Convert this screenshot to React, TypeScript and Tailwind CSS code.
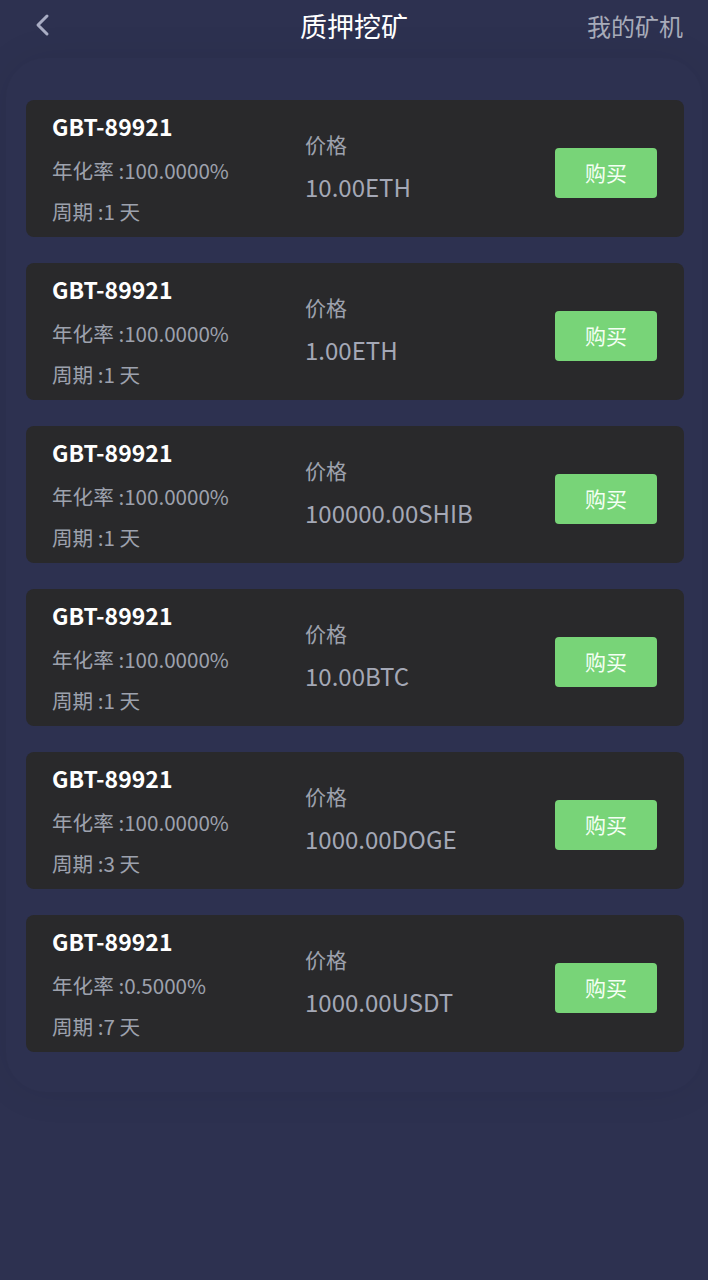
const items = [
  { rate: "100.0000%", days: 1, price: "10.00ETH" },
  { rate: "100.0000%", days: 1, price: "1.00ETH" },
  { rate: "100.0000%", days: 1, price: "100000.00SHIB" },
  { rate: "100.0000%", days: 1, price: "10.00BTC" },
  { rate: "100.0000%", days: 3, price: "1000.00DOGE" },
  { rate: "0.5000%", days: 7, price: "1000.00USDT" },
];

const font = { fontFamily: '"Noto Sans CJK SC", "Noto Sans", sans-serif' };

const MinerCard = ({ rate, days, price }: { rate: string; days: number; price: string }) => (
  <div className="flex items-start h-[137px] rounded-[8px] bg-[#29292b] pl-[26px] pr-[27px]">
    <div className="flex flex-col w-[253px] pt-[8px]">
      <span className="text-[23px] font-bold leading-[36px] text-white">GBT-89921</span>
      <span className="mt-[8px] text-[20.6px] leading-[36px] text-[#9da1ad]">年化率 :{rate}</span>
      <span className="mt-[5px] text-[20.6px] leading-[36px] text-[#9da1ad]">周期 :{days} 天</span>
    </div>
    <div className="flex flex-col flex-1 pt-[26px]">
      <span className="text-[21px] leading-[36px] text-[#9da1ad]">价格</span>
      <span className="mt-[7px] text-[24px] leading-[36px] text-[#a4a8b6]">{price}</span>
    </div>
    <button className="mt-[48px] h-[50px] w-[102px] rounded-[4px] bg-[#78d478] text-[21px] text-[#f4fff4]">
      购买
    </button>
  </div>
);

export default function App() {
  return (
    <div className="min-h-[1280px] bg-[#2d3150]" style={font}>
      <header className="relative flex h-[52px] items-center justify-center">
        <svg className="absolute left-[32px] top-[12px]" width="22" height="26" viewBox="0 0 22 26">
          <path d="M15 4 L6 13 L15 22" fill="none" stroke="#a9adc4" strokeWidth="3" strokeLinecap="round" strokeLinejoin="round" />
        </svg>
        <h1 className="text-[27px] text-white">质押挖矿</h1>
        <span className="absolute right-[25px] top-[8px] text-[24px] text-[#a7abb9]">我的矿机</span>
      </header>
      <div className="mx-[6px] mt-[6px] rounded-[40px] pl-[20px] pr-[18px] pt-[42px] pb-[40px] shadow-[0_0_40px_rgba(10,12,30,0.07)]">
        <div className="flex flex-col gap-[26px]">
          {items.map((it, i) => (
            <MinerCard key={i} {...it} />
          ))}
        </div>
      </div>
    </div>
  );
}
